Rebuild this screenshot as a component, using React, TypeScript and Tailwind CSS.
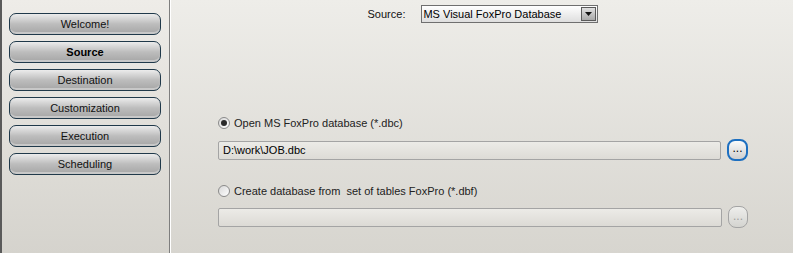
const steps = ['Welcome!', 'Source', 'Destination', 'Customization', 'Execution', 'Scheduling']

function Radio({ checked }: { checked?: boolean }) {
  return (
    <span className="w-[12px] h-[12px] rounded-full border border-[#8a8a8a] bg-gradient-to-br from-[#d8d8d8] to-[#ffffff] flex items-center justify-center shrink-0">
      {checked && <span className="w-[6px] h-[6px] rounded-full bg-[#2a2a2a]" />}
    </span>
  )
}

function Ellipsis({ active }: { active?: boolean }) {
  return (
    <button
      className={
        active
          ? 'w-[21px] h-[22px] rounded-[8px] border-2 border-[#1d6fc0] bg-gradient-to-b from-[#fbfbfb] to-[#cfcfcf] text-[12px] leading-none text-black flex items-end justify-center pb-[5px]'
          : 'w-[20px] h-[22px] rounded-[8px] border border-[#a4a4a4] bg-gradient-to-b from-[#eeeeec] to-[#d4d4d0] text-[12px] leading-none text-[#a0a0a0] flex items-end justify-center pb-[5px]'
      }
    >
      ...
    </button>
  )
}

export default function App() {
  return (
    <div
      className="w-[793px] h-[253px] flex text-[11px] text-[#111]"
      style={{ fontFamily: '"Liberation Sans", Arial, sans-serif' }}
    >
      {/* ── Step list ─────────────────────────── */}
      <div className="w-[169px] h-full border-l-2 border-[#5a5a5a] bg-gradient-to-b from-[#eeece8] to-[#d5d3cd] pl-[7px] pt-[13px] flex flex-col gap-[6px]">
        {steps.map((s) => (
          <div
            key={s}
            className={
              'w-[152px] h-[22px] rounded-[7px] border border-[#20394a] bg-gradient-to-b from-[#ececec] via-[#bdbdbd] to-[#a5a5a5] shadow-[inset_0_-2px_0_#c8c8c8] flex items-center justify-center ' +
              (s === 'Source' ? 'font-bold text-black' : 'text-[#111]')
            }
          >
            {s}
          </div>
        ))}
      </div>

      {/* divider */}
      <div className="w-[1px] h-full bg-[#7e7e7e]" />
      <div className="w-[1px] h-full bg-white" />

      {/* ── Source panel ─────────────────────── */}
      <div className="flex-1 h-full bg-gradient-to-b from-[#eeede9] to-[#d7d5cf] flex flex-col">
        <div className="flex items-center justify-center gap-[16px] pt-[5px] pl-[2px]">
          <span>Source:</span>
          <div className="w-[177px] h-[18px] border border-[#6f6f6f] bg-gradient-to-b from-[#ffffff] to-[#dedede] flex items-center">
            <span className="flex-1 pl-[1px] text-black">MS Visual FoxPro Database</span>
            <span className="w-[15px] h-[14px] mr-[1px] border border-[#5a5a5a] bg-gradient-to-b from-[#e0e0e0] to-[#a9a9a9] flex items-center justify-center">
              <svg width="7" height="4" viewBox="0 0 7 4"><path d="M0 0h7L3.5 4z" fill="#111" /></svg>
            </span>
          </div>
        </div>

        <div className="pl-[47px] pr-[45px] pt-[94px] flex flex-col">
          <label className="flex items-center gap-[4px] h-[12px] text-[#222]">
            <Radio checked />
            <span>Open MS FoxPro database (*.dbc)</span>
          </label>
          <div className="flex items-center gap-[6px] mt-[10px]">
            <div className="flex-1 h-[19px] rounded-[2px] border border-[#a4a4a4] bg-gradient-to-b from-[#ecebe7] to-[#dddbd6] flex items-center pl-[4px] text-black">
              D:\work\JOB.dbc
            </div>
            <Ellipsis active />
          </div>

          <label className="flex items-center gap-[4px] h-[12px] mt-[24px] text-[#222]">
            <Radio />
            <span>Create database from&nbsp; set of tables FoxPro (*.dbf)</span>
          </label>
          <div className="flex items-center gap-[6px] mt-[9px]">
            <div className="flex-1 h-[19px] rounded-[2px] border border-[#a4a4a4] bg-gradient-to-b from-[#ecebe7] to-[#dcdad5]" />
            <Ellipsis />
          </div>
        </div>
      </div>
    </div>
  )
}
